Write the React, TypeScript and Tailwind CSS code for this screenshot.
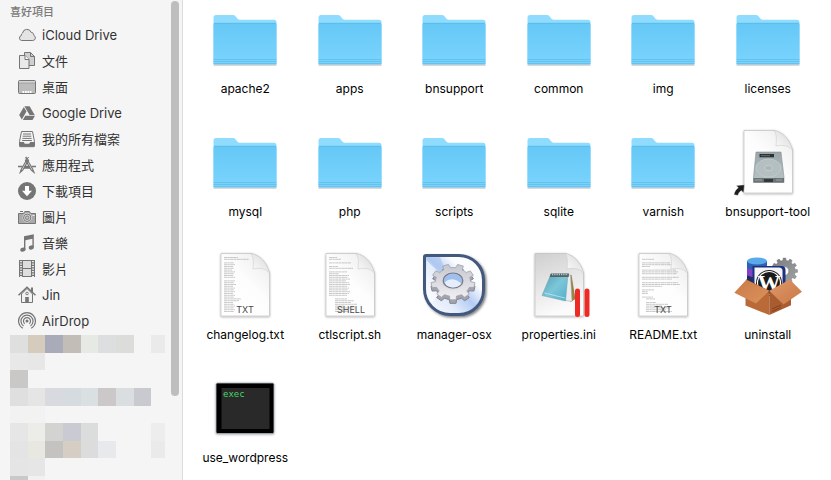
import type { ReactNode } from 'react'

const G = '#757575'

const NavSvg = ({ children }: { children: ReactNode }) => (
  <svg viewBox="0 0 18 18" className="size-[18px] shrink-0" fill="none" aria-hidden="true">
    {children}
  </svg>
)

const CloudIcon = () => (
  <NavSvg>
    <path d="M3.6 14.5h11.2a2.7 2.7 0 0 0 .9-5.2 2.6 2.6 0 0 0-2.6-3A4.4 4.4 0 0 0 4.6 7a2.4 2.4 0 0 0-1.3 2.6 2.5 2.5 0 0 0 .3 4.9z" fill="#e4e4e4" stroke={G} />
  </NavSvg>
)

const DocsIcon = () => (
  <NavSvg>
    <path d="M6.5.5h6l4 4v9h-10z" fill="#cfcfcf" stroke={G} />
    <path d="M12.5.5v4h4" stroke={G} />
    <path d="M1.5 3.5H7l4 4v9H1.5z" fill="#e9e9e9" stroke={G} />
    <path d="M7 3.5v4h4" fill="#fff" stroke={G} />
  </NavSvg>
)

const DesktopIcon = () => (
  <NavSvg>
    <rect x=".5" y="2.5" width="17" height="13" rx="1" fill="#bcbcbc" stroke={G} />
    <path d="M1 4h16" stroke="#efefef" />
    <path d="M1 5h16" stroke="#8c8c8c" strokeWidth=".6" />
    <path d="M4.5 13h1.7v2H4.5zM7 13h1.7v2H7zM9.4 13h1.7v2H9.4zM11.8 13h1.7v2h-1.7z" fill="#fff" />
  </NavSvg>
)

const DriveIcon = () => (
  <NavSvg>
    <path d="M6.4 2.2h5.2l5.1 8.8h-5.1z" fill={G} />
    <path d="M5.8 2.9l2.7 4.7-4.7 8L1.2 11z" fill={G} />
    <path d="M7.3 11.7H17L14.5 16H4.8z" fill={G} />
  </NavSvg>
)

const TrayIcon = () => (
  <NavSvg>
    <path d="M3.5 1.5h11l2 10v4.3a.9.9 0 0 1-.9.9H2.4a.9.9 0 0 1-.9-.9v-4.3z" fill="#f4f4f4" stroke={G} />
    <path d="M5 4h8M4.7 6.2h8.6M4.4 8.4h9.2M4.1 10.5h9.8" stroke={G} />
    <path d="M1.5 12h4.3l1 1.8h4.4l1-1.8h4.3v4.7h-15z" fill={G} />
  </NavSvg>
)

const AppsIcon = () => (
  <NavSvg>
    <path d="M9.8 2L3.3 13.3l-1 3 2.4-2.1L10.8 3.6" stroke={G} strokeWidth="1.2" />
    <path d="M8.2 2l6.5 11.3 1.2 3-2.6-2.1L7.2 3.6" stroke={G} strokeWidth="1.2" />
    <path d="M0 10.5h4.2M6.4 10.5h5.2M13.6 10.5H18M6 12h6" stroke={G} strokeWidth="1.3" />
    <path d="M7 2.2L8.5 1l1 1.5 1.3-1.3" stroke={G} />
  </NavSvg>
)

const DownloadIcon = () => (
  <NavSvg>
    <circle cx="9" cy="9" r="9" fill={G} />
    <path d="M7 4h4v4.8h3L9 14.2 4 8.8h3z" fill="#fff" />
  </NavSvg>
)

const CameraIcon = () => (
  <NavSvg>
    <path d="M2 3.5h3" stroke={G} />
    <path d="M.5 5.5h5l1.3-2h4.6l1.3 2h4.8v10H.5z" fill="#a9a9a9" stroke={G} />
    <circle cx="9.2" cy="9.8" r="4.6" fill="#f0f0f0" />
    <circle cx="9.2" cy="9.8" r="3.7" fill="#d5d5d5" stroke={G} />
    <circle cx="9.2" cy="9.8" r="1.8" fill="#bbb" stroke={G} strokeWidth=".8" />
    <path d="M14.5 7.5h2" stroke="#eee" />
  </NavSvg>
)

const MusicIcon = () => (
  <NavSvg>
    <path d="M6 2.2L15.8.2v13h-1.4V4.8l-7 1.4v9.3H6z" fill={G} />
    <ellipse cx="4.9" cy="15.7" rx="2.7" ry="2" fill={G} transform="rotate(-18 4.9 15.7)" />
    <ellipse cx="13.3" cy="13.5" rx="2.7" ry="2" fill={G} transform="rotate(-18 13.3 13.5)" />
  </NavSvg>
)

const FilmIcon = () => (
  <NavSvg>
    <rect x="1" y="0" width="16" height="17" fill={G} />
    <path d="M5 1h8v7H5zM5 9h8v7H5z" fill="#dedede" />
    <path d="M3 1v16M15 1v16" stroke="#f5f5f5" strokeWidth="1.8" strokeDasharray="1.3 1.2" />
  </NavSvg>
)

const HomeIcon = () => (
  <NavSvg>
    <path d="M13 1.5h2v5h-2z" fill={G} />
    <path d="M3.5 8L9 2.5 14.5 8v8.5h-11z" fill="#f1f1f1" stroke={G} />
    <path d="M.5 9.2L9 1.2l8.5 8" stroke={G} strokeWidth="1.5" />
    <path d="M7.2 11h3.6v5.5H7.2z" fill={G} />
    <circle cx="9" cy="7.5" r="1.3" stroke={G} strokeWidth=".9" />
  </NavSvg>
)

const AirDropIcon = () => (
  <NavSvg>
    <circle cx="9" cy="9" r="1.5" fill={G} />
    <path d="M6.7 11.7a3.5 3.5 0 1 1 4.6 0M5.5 14a6 6 0 1 1 7 0M4.8 16.3a8.4 8.4 0 1 1 8.4 0" stroke={G} strokeWidth="1.2" />
  </NavSvg>
)

const places = [
  { label: 'iCloud Drive', Icon: CloudIcon },
  { label: '文件', Icon: DocsIcon },
  { label: '桌面', Icon: DesktopIcon },
  { label: 'Google Drive', Icon: DriveIcon },
  { label: '我的所有檔案', Icon: TrayIcon },
  { label: '應用程式', Icon: AppsIcon },
  { label: '下載項目', Icon: DownloadIcon },
  { label: '圖片', Icon: CameraIcon },
  { label: '音樂', Icon: MusicIcon },
  { label: '影片', Icon: FilmIcon },
  { label: 'Jin', Icon: HomeIcon },
  { label: 'AirDrop', Icon: AirDropIcon },
]

// pixelated block over the private part of the sidebar
const mosaicX = [0, 18, 35, 53, 71, 88, 106, 124, 141, 155]
const mosaicY = [0, 18, 35, 53, 71, 88, 106, 123, 141, 159]
const mosaic = [
  ['#dfdfdf', '#d5ccbd', '#a9acb8', '#c3bdb7', '#e7e9e5', '#dddee0', '#dcdcda', '', '#eaeaea'],
  ['#e8e8e8', '#e7e7e7'],
  ['#c9c8c6'],
  ['#dfdfdf', '#e5e5e5', '#d9dadf', '#d6dbdf', '#dadfe1', '#ccc8ca', '#dbdee1', '#c9cad0'],
  ['#f2f2f2', '#f2f2f2'],
  ['#e6e6e6', '#ecece9', '#d3d3d1', '#cacbd2', '#dbdddc', '', '', '', '#ededed'],
  ['#e4e4e4', '#e8e7e0', '#c4c3c1', '#d6cdc4', '#dcdcdd', '#e7e9ed', '', '', '#eaeaea'],
  ['#e5e5e5', '#e6e6e6'],
  ['#c9c9c9', '#f1f1f3'],
]

const Mosaic = () => (
  <svg width="155" height="159" className="shrink-0" shapeRendering="crispEdges" aria-hidden="true">
    {mosaic.map((row, r) =>
      row.map((fill, c) =>
        fill ? (
          <rect key={`${r}-${c}`} x={mosaicX[c]} y={mosaicY[r]} width={mosaicX[c + 1] - mosaicX[c]} height={mosaicY[r + 1] - mosaicY[r]} fill={fill} />
        ) : null
      )
    )}
  </svg>
)

const FileSvg = ({ children }: { children: ReactNode }) => (
  <svg viewBox="0 0 64 64" className="size-16 overflow-visible" aria-hidden="true">
    {children}
  </svg>
)

const FolderIcon = () => (
  <FileSvg>
    <path d="M.5 56V10.5Q.5 8 3 8h17q1.500 0 2.500 1.200l2 2.500q1 1.100 2.500 1.100h34q2.500 0 2.500 2.500V56z" fill="#8fdcfe" />
    <path d="M.5 57.500h63" stroke="#000" strokeOpacity=".2" strokeWidth="2.500" />
    <path d="M.5 17.500q0-1.500 1.500-1.500h60q1.500 0 1.500 1.500V56q0 1.500-1.500 1.500H2Q.5 57.500.5 56z" fill="url(#folder)" />
    <path d="M1 16.300h62" stroke="#56b9e6" strokeWidth=".8" />
    <path d="M.5 52.500h63M.5 54.500h63M.5 56.500h63" stroke="#4fb3e0" strokeOpacity=".65" strokeWidth=".8" />
  </FileSvg>
)

const Page = ({ children, grey }: { children?: ReactNode; grey?: boolean }) => (
  <>
    <path d="M8 .5h30C47 2 54 10 56.5 20v43H8z" fill={grey ? 'url(#paperGrey)' : 'url(#paper)'} stroke="#c0c0c0" strokeWidth=".7" filter="url(#soft)" />
    {children}
    <path d="M38 .5C41 4 40.500 10 40 16c6-1.500 13-.5 16.500 4C54 10 47 2 38 .5z" fill="url(#fold)" stroke="#c4c4c4" strokeWidth=".5" />
  </>
)

// widths of the tiny preview lines, one number per line
const changelogLines = [14, 25, 0, 10, 11, 9, 10, 8, 11, 10, 9, 11, 0, 11, 10, 12, 9, 11, 10, 11, 9, 11, 10, 17, 15, 9, 10, 11, 10, 11, 10]
const shellLines = [8, 12, 0, 22, 0, 9, 24, 0, 18, 10, 20, 19, 21, 17, 20, 21, 18, 20, 19, 21, 20, 18, 0, 12, 19, 16, 22, 10, 20, 12, 14]
const readmeLines = [0, 12, 0, 28, 30, 8, 0, 34, 36, 35, 0, 37, 30, 0, 36, 38, 20, 0, 12, 6, 6, 0, 11, 9, 0, 10, 22, 16, 24, 20, 26]

const TextFile = ({ lines, tag, indent = 0 }: { lines: number[]; tag: string; indent?: number }) => (
  <FileSvg>
    <Page>
      {lines.map((w, i) =>
        w ? <path key={i} d={`M${11 + (i > 22 ? indent : 0)} ${4.5 + i * 1.8}h${w}`} stroke="#8a8a8a" strokeOpacity=".5" strokeWidth=".9" strokeDasharray="3.500 .3 2 .4" /> : null
      )}
    </Page>
    <text x={tag === 'TXT' ? 32 : 33} y="60" textAnchor="middle" fontFamily="Inter, sans-serif" fontSize="9" fill="#4a4a4a">
      {tag}
    </text>
  </FileSvg>
)

const DiskIcon = () => (
  <FileSvg>
    <Page />
    <path d="M20 22h25l3 25v5.500H17.500V47z" fill="url(#disk)" stroke="#8a9294" strokeWidth=".6" />
    <path d="M17.500 48H48v4.500H17.500z" fill="#6b7377" />
    <path d="M19 50h7M40 50h6" stroke="#a9b0b3" strokeWidth=".8" />
    <path d="M28 49h9v3h-9z" fill="#33383b" />
    <path d="M23.500 24H38v3.300H23.500z" fill="#2a3033" />
    <path d="M25 25.700h9" stroke="#738083" strokeWidth=".8" />
    <ellipse cx="32.500" cy="38" rx="12.500" ry="9" fill="#b3bfc1" stroke="#cad4d5" strokeWidth=".6" />
    <ellipse cx="32.500" cy="38" rx="4" ry="2.800" fill="#abb7b9" stroke="#d0d9da" strokeWidth=".6" />
    <path d="M0 55.500l8.500-.8-.8 8.300-2.400-2.300c-1.800 1-2.800 2.600-3.300 4.800l-4.200-.8c.8-3.300 2.300-5.600 4.500-7z" fill="#1e1e1e" stroke="#fff" strokeWidth=".5" />
  </FileSvg>
)

function gearPath(cx: number, cy: number, rx: number, ry: number, teeth: number, depth: number, phase = 0) {
  const pts: string[] = []
  const steps: [number, number][] = [[-0.5, depth], [-0.29, depth], [-0.2, 1], [0.2, 1], [0.29, depth]]
  for (let i = 0; i < teeth; i++) {
    for (const [o, s] of steps) {
      const a = ((i + o + phase) / teeth) * Math.PI * 2
      pts.push(`${(cx + Math.cos(a) * rx * s).toFixed(2)} ${(cy + Math.sin(a) * ry * s).toFixed(2)}`)
    }
  }
  return `M${pts.join('L')}Z`
}

const ManagerIcon = () => (
  <FileSvg>
    <path d="M4 2.500h33a24.500 24.500 0 0 1 24.500 24.500v10a24.500 24.500 0 0 1-24.500 24.500h-9A25.500 25.500 0 0 1 2.500 36V4q0-1.500 1.500-1.500z" fill="url(#managerBg)" stroke="#43597d" strokeWidth="3" strokeLinejoin="round" filter="url(#drop)" />
    <path d="M4.300 7L26 28 10 50Q4.300 44 4.300 36z" fill="#fff" fillOpacity=".6" />
    <path d="M4.300 4.300H18L26 24z" fill="#a9c5f0" fillOpacity=".7" />
    <g strokeLinejoin="round">
      <path d={gearPath(31, 32.5, 22, 18, 9, 0.8, 0.25)} fill="#a4a4ae" stroke="#85858f" strokeWidth="1" />
      <path d={gearPath(31, 29, 22, 18, 9, 0.8, 0.25)} fill="url(#gear)" stroke="#a0a0aa" strokeWidth=".8" />
    </g>
    <ellipse cx="31" cy="27.500" rx="11.500" ry="9" fill="#d4d4db" />
    <ellipse cx="31" cy="27.500" rx="9.800" ry="7.500" fill="#9fc0ee" stroke="#777783" strokeWidth="1.200" />
    <path d="M22.500 29.500q7-7 17 1-3 4-9 4-6-.5-8-5z" fill="#e6eefb" />
  </FileSvg>
)

const NotepadIcon = () => (
  <FileSvg>
    <Page grey />
    <path d="M41 22h3.500l4 24-5 3z" fill="#9c8345" />
    <path d="M23 21.500l20.500.5L45 48.500l-6.500-1z" fill="#e9edee" stroke="#9aa3a5" strokeWidth=".5" />
    <path d="M24 21h17l-2.500 27L15 42.500z" fill="url(#pad)" stroke="#6f9dab" strokeWidth=".5" />
    <path d="M24 20.500h18l-.3 3.500H22.600z" fill="#536469" />
    <path d="M25 21.500h16" stroke="#d7dcde" strokeWidth="1.500" strokeDasharray=".8 1" />
    <path d="M17.500 40L38 45" stroke="#d9f2f8" strokeOpacity=".6" />
    <path d="M50.500 38v23.500M60 38v23.500" stroke="#ee2a24" strokeWidth="5" strokeLinecap="round" />
  </FileSvg>
)

const UninstallIcon = () => (
  <FileSvg>
    <path d={gearPath(48.5, 18, 13, 13, 12, 0.82)} fill="url(#steel)" stroke="#77797c" strokeWidth=".5" />
    <circle cx="48.500" cy="18" r="4.500" fill="#fff" stroke="#888" />
    <path d="M11 8v22h20V8z" fill="#2b62b4" />
    <path d="M11 15q10 4 20 0v7.500q-10 4-20 0z" fill="#8440c5" />
    <path d="M11 22.500q10 4 20 0V32H11z" fill="#1b2c63" />
    <ellipse cx="21" cy="8" rx="10" ry="3.500" fill="#5aa9ea" />
    <path d="M16.500 13h29q4 0 4 4v25h-33z" fill="#1d3183" />
    <path d="M18.500 14.500H43q3.500 0 3.500 3.500v24h-28z" fill="#f6f6f6" />
    <circle cx="33" cy="30" r="13" fill="#1b1b1b" />
    <circle cx="33" cy="30" r="11.500" fill="none" stroke="#fff" strokeWidth="1.200" />
    <text x="33" y="38" textAnchor="middle" fontFamily="Liberation Serif, serif" fontWeight="700" fontSize="23" fill="#fff">
      W
    </text>
    <path d="M9.500 42l23.800-4.300V62L9.500 52.500z" fill="#b96a38" />
    <path d="M33.300 37.700L55 42v10.300L33.300 62z" fill="#a85c2f" />
    <path d="M36 56l9-4M36 58.500l9-4" stroke="#7b3c18" strokeWidth=".8" />
    <path d="M10.300 26.300l23 11.400L33.300 40 9.500 29z" fill="#8c4820" />
    <path d="M-1.700 39.700l12-12.900 23 11L20 50.500z" fill="url(#flapL)" />
    <path d="M33.300 37.800l20.500-11.300L66 38.700 47.500 51.500z" fill="url(#flapR)" />
  </FileSvg>
)

const ExecIcon = () => (
  <FileSvg>
    <rect x="3" y="7" width="58" height="50.500" rx="1.500" fill="#050505" stroke="#a9b6bb" strokeWidth=".8" filter="url(#soft)" />
    <rect x="8.500" y="12" width="48" height="41" fill="#292929" />
    <text x="10" y="20.500" fontFamily="DejaVu Sans Mono, monospace" fontSize="9" fill="#45d668">
      exec
    </text>
  </FileSvg>
)

const Changelog = () => <TextFile lines={changelogLines} tag="TXT" />
const Shell = () => <TextFile lines={shellLines} tag="SHELL" indent={6} />
const Readme = () => <TextFile lines={readmeLines} tag="TXT" indent={4} />

const files = [
  { name: 'apache2', Icon: FolderIcon },
  { name: 'apps', Icon: FolderIcon },
  { name: 'bnsupport', Icon: FolderIcon },
  { name: 'common', Icon: FolderIcon },
  { name: 'img', Icon: FolderIcon },
  { name: 'licenses', Icon: FolderIcon },
  { name: 'mysql', Icon: FolderIcon },
  { name: 'php', Icon: FolderIcon },
  { name: 'scripts', Icon: FolderIcon },
  { name: 'sqlite', Icon: FolderIcon },
  { name: 'varnish', Icon: FolderIcon },
  { name: 'bnsupport-tool', Icon: DiskIcon },
  { name: 'changelog.txt', Icon: Changelog },
  { name: 'ctlscript.sh', Icon: Shell },
  { name: 'manager-osx', Icon: ManagerIcon },
  { name: 'properties.ini', Icon: NotepadIcon },
  { name: 'README.txt', Icon: Readme },
  { name: 'uninstall', Icon: UninstallIcon },
  { name: 'use_wordpress', Icon: ExecIcon },
]

// gradients and filters shared by the file icons
const Defs = () => (
  <svg className="absolute size-0" aria-hidden="true">
    <defs>
      <linearGradient id="folder" x1="0" y1="0" x2="0" y2="1">
        <stop offset="0" stopColor="#66c8f6" />
        <stop offset="1" stopColor="#7ad4fd" />
      </linearGradient>
      <linearGradient id="paper" x1="1" y1="0" x2=".2" y2="1">
        <stop offset="0" stopColor="#eaeaea" />
        <stop offset=".5" stopColor="#fdfdfd" />
        <stop offset="1" stopColor="#fff" />
      </linearGradient>
      <linearGradient id="paperGrey" x1="0" y1="0" x2=".3" y2="1">
        <stop offset="0" stopColor="#cfcfcf" />
        <stop offset="1" stopColor="#fbfbfb" />
      </linearGradient>
      <linearGradient id="fold" x1="1" y1="0" x2="0" y2="1">
        <stop offset=".3" stopColor="#e2e2e2" />
        <stop offset="1" stopColor="#fff" />
      </linearGradient>
      <linearGradient id="disk" x1="0" y1="0" x2="0" y2="1">
        <stop offset="0" stopColor="#99a5a8" />
        <stop offset="1" stopColor="#b9c4c6" />
      </linearGradient>
      <linearGradient id="managerBg" x1="1" y1="0" x2="0" y2="1">
        <stop offset=".3" stopColor="#fbfcff" />
        <stop offset=".5" stopColor="#b4ccf3" />
        <stop offset=".7" stopColor="#e3ecfb" />
        <stop offset="1" stopColor="#fff" />
      </linearGradient>
      <linearGradient id="gear" x1="0" y1="0" x2="0" y2="1">
        <stop offset="0" stopColor="#c6c6ce" />
        <stop offset="1" stopColor="#f0f0f4" />
      </linearGradient>
      <linearGradient id="pad" x1="0" y1="0" x2="1" y2="1">
        <stop offset="0" stopColor="#4f9fb4" />
        <stop offset=".5" stopColor="#7cc6d8" />
        <stop offset="1" stopColor="#4eafc9" />
      </linearGradient>
      <linearGradient id="steel" x1="0" y1="0" x2="1" y2="1">
        <stop offset="0" stopColor="#77797c" />
        <stop offset="1" stopColor="#a3a6a8" />
      </linearGradient>
      <linearGradient id="flapL" x1="0" y1="0" x2="1" y2="1">
        <stop offset="0" stopColor="#c97a45" />
        <stop offset="1" stopColor="#dc935f" />
      </linearGradient>
      <linearGradient id="flapR" x1="0" y1="0" x2="1" y2="1">
        <stop offset="0" stopColor="#e0986a" />
        <stop offset="1" stopColor="#c97845" />
      </linearGradient>
      <filter id="soft" x="-20%" y="-20%" width="140%" height="140%">
        <feDropShadow dx="0" dy=".7" stdDeviation=".9" floodOpacity=".35" />
      </filter>
      <filter id="drop" x="-20%" y="-20%" width="140%" height="140%">
        <feDropShadow dx="1.500" dy="1.500" stdDeviation="1.200" floodOpacity=".5" />
      </filter>
    </defs>
  </svg>
)

export default function App() {
  return (
    <div className="flex h-screen overflow-hidden bg-white font-['Inter','Noto_Sans_CJK_TC',sans-serif]">
      <Defs />
      <aside className="flex w-[183px] shrink-0 justify-between border-r border-[#dcdcdc] bg-[#f5f5f5]">
        <nav aria-labelledby="favorites" className="flex flex-col pl-[10px]">
          <h2 id="favorites" className="h-[22px] pt-[2px] text-[11px] leading-5 font-medium text-[#7b7b7b]">
            喜好項目
          </h2>
          <ul className="pl-2">
            {places.map(({ label, Icon }) => (
              <li key={label}>
                <a href="#" className="flex h-[26px] items-center gap-[6px] text-[13px] leading-5 text-[#333]">
                  <Icon />
                  {label}
                </a>
              </li>
            ))}
          </ul>
          <div className="mt-px">
            <Mosaic />
          </div>
        </nav>
        <div className="mt-px mr-[3px] h-[395px] w-2 shrink-0 rounded-full bg-[#bebebe]" />
      </aside>

      <main className="flex-1 pt-[7px] pr-[11px] pl-[10px]">
        <ul className="grid grid-cols-6">
          {files.map(({ name, Icon }) => (
            <li key={name} className="flex h-[123px] justify-center">
              <button type="button" className="flex flex-col items-center gap-2 self-start text-[12px] leading-5 text-black">
                <Icon />
                {name}
              </button>
            </li>
          ))}
        </ul>
      </main>
    </div>
  )
}
